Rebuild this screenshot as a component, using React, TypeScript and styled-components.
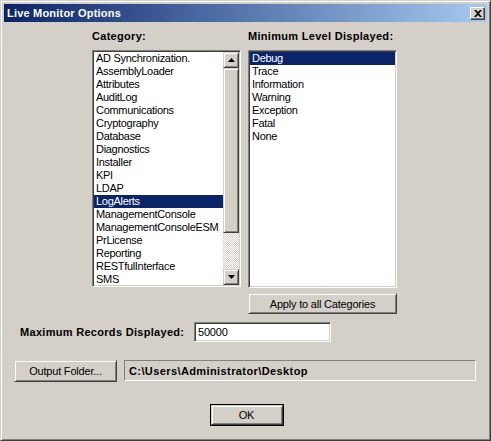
import React from 'react'
import styled, { createGlobalStyle } from 'styled-components'

const categories = [
  'AD Synchronization.',
  'AssemblyLoader',
  'Attributes',
  'AuditLog',
  'Communications',
  'Cryptography',
  'Database',
  'Diagnostics',
  'Installer',
  'KPI',
  'LDAP',
  'LogAlerts',
  'ManagementConsole',
  'ManagementConsoleESM',
  'PrLicense',
  'Reporting',
  'RESTfulInterface',
  'SMS',
]

const levels = ['Debug', 'Trace', 'Information', 'Warning', 'Exception', 'Fatal', 'None']

const GlobalStyle = createGlobalStyle`
  html, body {
    margin: 0;
    padding: 0;
    background: #d4d0c8;
  }
  * {
    box-sizing: border-box;
  }
`

export default function App(): JSX.Element {
  return (
    <>
      <GlobalStyle />
      <Frame>
        <TitleBar>
          <TitleText>Live Monitor Options</TitleText>
          <CloseButton>
            <svg width='8' height='7' viewBox='0 0 8 7'>
              <path d='M0 0h2l2 2 2-2h2L5 3.5 8 7H6L4 5 2 7H0l3-3.5z' fill='#000' />
            </svg>
          </CloseButton>
        </TitleBar>
        <Body>
          <ListsRow>
            <Column>
              <GroupLabel>Category:</GroupLabel>
              <ListBox $height={237}>
                <Items>
                  {categories.map(name => (
                    <Item key={name} $selected={name === 'LogAlerts'}>
                      {name}
                    </Item>
                  ))}
                </Items>
                <ScrollBar>
                  <ArrowButton>
                    <svg width='7' height='4' viewBox='0 0 7 4'>
                      <path d='M3.5 0L7 4H0z' fill='#000' />
                    </svg>
                  </ArrowButton>
                  <Thumb />
                  <Track />
                  <ArrowButton>
                    <svg width='7' height='4' viewBox='0 0 7 4'>
                      <path d='M0 0h7L3.5 4z' fill='#000' />
                    </svg>
                  </ArrowButton>
                </ScrollBar>
              </ListBox>
            </Column>
            <Column>
              <GroupLabel>Minimum Level Displayed:</GroupLabel>
              <ListBox $height={238}>
                <Items>
                  {levels.map(name => (
                    <Item key={name} $selected={name === 'Debug'}>
                      {name}
                    </Item>
                  ))}
                </Items>
              </ListBox>
              <ApplyButton>Apply to all Categories</ApplyButton>
            </Column>
          </ListsRow>

          <RecordsRow>
            <FieldLabel>Maximum Records Displayed:</FieldLabel>
            <TextInput>50000</TextInput>
          </RecordsRow>

          <FolderRow>
            <FolderButton>Output Folder...</FolderButton>
            <PathBox>C:\Users\Administrator\Desktop</PathBox>
          </FolderRow>

          <FooterRow>
            <OkButton>
              <OkInner>OK</OkInner>
            </OkButton>
          </FooterRow>
        </Body>
      </Frame>
    </>
  )
}

// Styled components
const Frame = styled.div`
  width: 491px;
  height: 441px;
  padding: 3px;
  background: #d4d0c8;
  border: 1px solid;
  border-color: #d4d0c8 #404040 #404040 #d4d0c8;
  box-shadow: inset 1px 1px #fff, inset -1px -1px #808080;
  display: flex;
  flex-direction: column;
  font-family: 'Liberation Sans', Arial, sans-serif;
  font-size: 11px;
  color: #000;
`
const TitleBar = styled.div`
  height: 18px;
  display: flex;
  align-items: center;
  justify-content: space-between;
  padding: 0 2px 0 3px;
  background: linear-gradient(to right, #0a246a, #a6caf0);
`
const TitleText = styled.span`
  color: #fff;
  font-weight: bold;
  font-size: 11px;
  letter-spacing: 0.2px;
`
const CloseButton = styled.div`
  width: 15px;
  height: 13px;
  display: flex;
  align-items: center;
  justify-content: center;
  background: #d4d0c8;
  border: 1px solid;
  border-color: #fff #404040 #404040 #fff;
  box-shadow: inset -1px -1px #808080;
`
const Body = styled.div`
  flex: 1;
  display: flex;
  flex-direction: column;
  padding: 6px 10px 0;
`
const ListsRow = styled.div`
  display: flex;
  gap: 7px;
  margin-left: 78px;
`
const Column = styled.div`
  display: flex;
  flex-direction: column;
  width: 149px;
`
const GroupLabel = styled.div`
  font-weight: bold;
  font-size: 11px;
  letter-spacing: 0.3px;
  line-height: 16px;
  margin-bottom: 6px;
`
const ListBox = styled.div<{ $height: number }>`
  height: ${props => props.$height}px;
  display: flex;
  background: #fff;
  border: 1px solid;
  border-color: #808080 #fff #fff #808080;
  box-shadow: inset 1px 1px #404040, inset -1px -1px #d4d0c8;
  padding: 1px;
  overflow: hidden;
`
const Items = styled.div`
  flex: 1;
  display: flex;
  flex-direction: column;
  min-width: 0;
`
const Item = styled.div<{ $selected?: boolean }>`
  height: 13px;
  line-height: 13px;
  padding-left: 2px;
  white-space: nowrap;
  letter-spacing: -0.3px;
  background: ${props => (props.$selected ? '#0a246a' : 'transparent')};
  color: ${props => (props.$selected ? '#fff' : '#000')};
`
const ScrollBar = styled.div`
  width: 16px;
  display: flex;
  flex-direction: column;
`
const raised = `
  background: #d4d0c8;
  border: 1px solid;
  border-color: #d4d0c8 #404040 #404040 #d4d0c8;
  box-shadow: inset 1px 1px #fff, inset -1px -1px #808080;
`
const ArrowButton = styled.div`
  ${raised}
  height: 16px;
  display: flex;
  align-items: center;
  justify-content: center;
`
const Thumb = styled.div`
  ${raised}
  height: 165px;
`
const Track = styled.div`
  flex: 1;
  background: repeating-conic-gradient(#d4d0c8 0 25%, #fff 0 50%) 0 0 / 2px 2px;
`
const Button = styled.div`
  ${raised}
  display: flex;
  align-items: center;
  justify-content: center;
  font-size: 11px;
  letter-spacing: -0.2px;
`
const ApplyButton = styled(Button)`
  height: 21px;
  margin-top: 5px;
`
const RecordsRow = styled.div`
  display: flex;
  align-items: center;
  margin-top: 8px;
  padding-left: 6px;
`
const FieldLabel = styled.span`
  font-weight: bold;
  letter-spacing: 0.3px;
  width: 174px;
`
const TextInput = styled.div`
  width: 137px;
  height: 20px;
  line-height: 16px;
  padding-left: 3px;
  padding-top: 1px;
  letter-spacing: -0.2px;
  background: #fff;
  border: 1px solid;
  border-color: #808080 #fff #fff #808080;
  box-shadow: inset 1px 1px #404040, inset -1px -1px #d4d0c8;
`
const FolderRow = styled.div`
  display: flex;
  gap: 7px;
  margin-top: 18px;
`
const FolderButton = styled(Button)`
  width: 103px;
  height: 22px;
`
const PathBox = styled.div`
  width: 352px;
  height: 21px;
  display: flex;
  align-items: center;
  padding-left: 4px;
  font-weight: bold;
  letter-spacing: 0.4px;
  border: 1px solid;
  border-color: #808080 #fff #fff #808080;
`
const FooterRow = styled.div`
  display: flex;
  justify-content: center;
  margin-top: 22px;
  padding-left: 2px;
`
const OkButton = styled.div`
  width: 74px;
  height: 22px;
  border: 1px solid #000;
`
const OkInner = styled(Button)`
  width: 100%;
  height: 100%;
`
